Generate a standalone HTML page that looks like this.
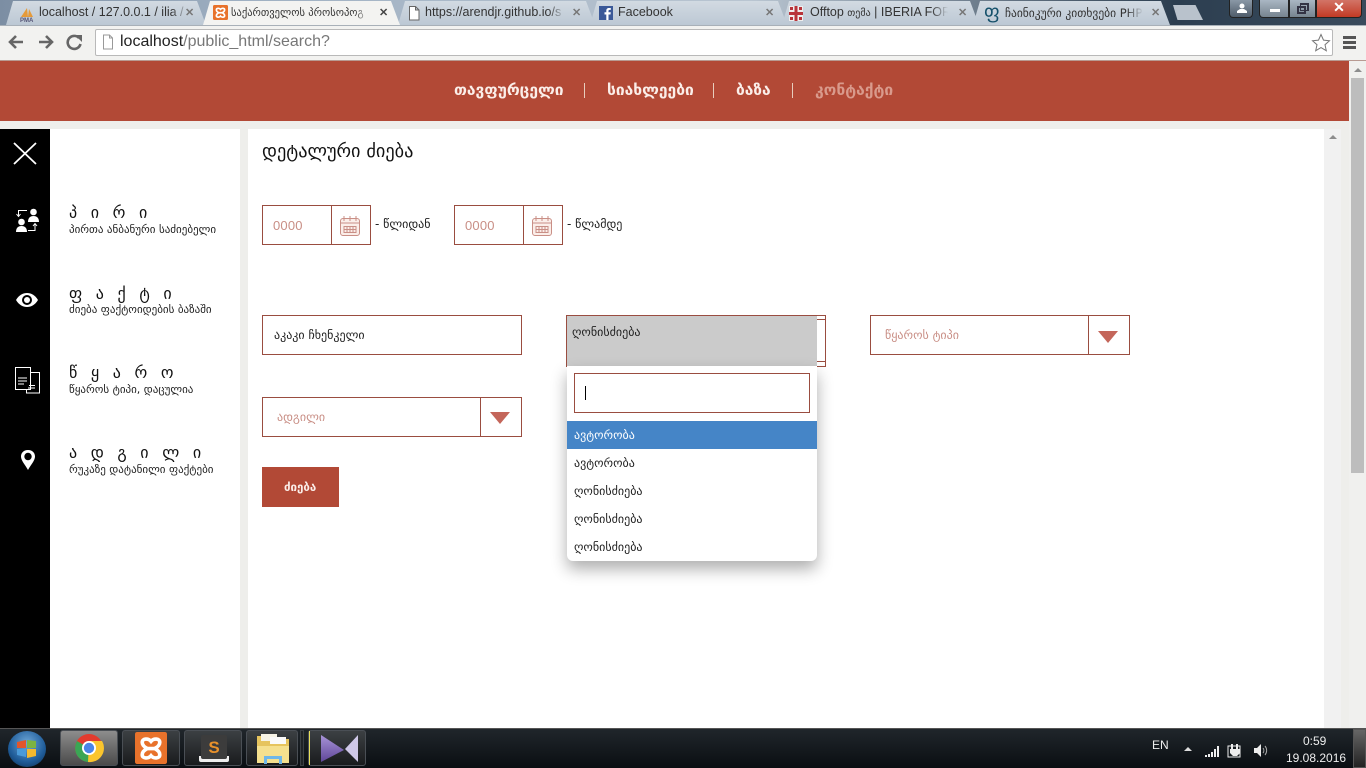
<!DOCTYPE html>
<html lang="ka"><head><meta charset="utf-8"><title>search</title>
<style>
*{box-sizing:border-box}
html,body{margin:0;padding:0;width:1366px;height:768px;overflow:hidden;background:#eeeeeb;font-family:"DejaVu Sans","Liberation Sans",sans-serif}
.a{position:absolute}
.t{position:absolute;white-space:nowrap}
.ls{font-family:"Liberation Sans",sans-serif}
.tab{position:absolute;top:1px;height:24px;background:linear-gradient(#d2dae2,#bcc8d4);clip-path:polygon(0 100%,7px 0,calc(100% - 9px) 0,100% 100%);font:12.5px "Liberation Sans",sans-serif;color:#333;overflow:hidden}
.tab.on{background:#f3f3f1}
.tab span{position:absolute;top:4px;white-space:nowrap}
.tab span.fd{-webkit-mask-image:linear-gradient(90deg,#000 88%,transparent);mask-image:linear-gradient(90deg,#000 88%,transparent)}
.tab b{position:absolute;top:5px;font:bold 11px "Liberation Sans",sans-serif;color:#777}
.bx{position:absolute;border:1px solid #9a4d40;background:#fff}
.tb{position:absolute;top:730px;width:58px;height:36px;border:1px solid #4a4f55;border-radius:3px;background:linear-gradient(#3c4043,#191b1d)}
.h{position:absolute;white-space:nowrap;left:69px;font-size:16px;letter-spacing:13.6px;color:#111}
.s{position:absolute;white-space:nowrap;left:69px;font-size:11px;color:#222}
.n{position:absolute;white-space:nowrap;top:81px;font-size:15.6px;font-weight:bold;color:#fbeee9}
.f{position:absolute;white-space:nowrap;font-size:12px;color:#222}
.ph{color:#c98f86}
</style></head>
<body>
<!-- window frame -->
<div class="a" style="left:0;top:0;width:1366px;height:25px;background:linear-gradient(90deg,#7c8ea3 0,#9fb0c2 18%,#b9c5d1 55%,#2c3e50 86%,#3a4b5c 100%)"></div>
<div class="tab" style="left:6px;width:200px"><svg class="a" style="left:13px;top:6px" width="18" height="16" viewBox="0 0 18 16"><path d="M2 10 8 1l1 9zM9 10l1-8 4 8z" fill="#e59a3a"/><text x="1" y="15" font-size="6" font-weight="bold" fill="#557" font-family="Liberation Sans">PMA</text></svg><span class="fd" style="left:33px;width:150px;overflow:hidden">localhost / 127.0.0.1 / ilia /</span><b style="left:179px">✕</b></div>
<div class="tab on" style="left:203px;width:197px;z-index:2"><svg class="a" style="left:10px;top:4px" width="15" height="15" viewBox="0 0 31 31"><rect width="31" height="31" rx="3" fill="#e8722b"/><path d="M15.500 9C13 6 7 6 7 10c0 3 3 5 5 6-2 1-5 3-5 6 0 4 6 4 8.500 1C18 26 24 26 24 22c0-3-3-5-5-6 2-1 5-3 5-6 0-4-6-4-8.500-1zM12 16h7" fill="none" stroke="#fff" stroke-width="3.500"/></svg><span class="fd" style="left:28px;font:10.500px 'DejaVu Sans',sans-serif;top:6px;width:140px;overflow:hidden">საქართველოს პროსოპოგ</span><b style="left:176px;color:#444">✕</b></div>
<div class="tab" style="left:398px;width:197px"><svg class="a" style="left:10px;top:5px" width="12" height="15" viewBox="0 0 12 15"><path d="M1.500.5h6l3.500 3.500v10h-9.500zM7.500.5V4H11" fill="#fff" stroke="#666"/></svg><span class="fd" style="left:27px;width:140px;overflow:hidden">https://arendjr.github.io/s</span><b style="left:174px">✕</b></div>
<div class="tab" style="left:590px;width:197px"><svg class="a" style="left:9px;top:5px" width="14" height="14" viewBox="0 0 14 14"><rect width="14" height="14" fill="#3b5998"/><path d="M9.500 14V8.500h2l.3-2.200H9.500V5c0-.7.3-1.100 1.100-1.100h1.200V2h-1.700C8.300 2 7.300 3 7.300 4.700v1.600H5.500v2.200h1.800V14z" fill="#fff"/></svg><span style="left:28px">Facebook</span><b style="left:175px">✕</b></div>
<div class="tab" style="left:782px;width:197px"><svg class="a" style="left:7px;top:5px" width="14" height="15" viewBox="0 0 14 15"><rect width="14" height="15" fill="#eee"/><path d="M5.500 0h3v15h-3zM0 6h14v3H0z" fill="#b8343a"/><path d="M1 1h3v3H1zM10 1h3v3h-3zM1 11h3v3H1zM10 11h3v3h-3z" fill="#b8343a"/></svg><span class="fd" style="left:28px;width:138px;overflow:hidden">Offtop <i style="font:normal 10px 'DejaVu Sans'">თემა</i> | IBERIA FORU</span><b style="left:176px">✕</b></div>
<div class="tab" style="left:973px;width:197px"><span style="left:11px;top:0;font:19px 'DejaVu Sans';color:#14506a">ფ</span><span class="fd" style="left:32px;top:5px;font:11.500px 'DejaVu Sans',sans-serif;width:138px;overflow:hidden">ჩაინიკური კითხვები PHP</span><b style="left:178px">✕</b></div>
<div class="a" style="left:1173px;top:5px;width:30px;height:15px;background:#b9c2cc;clip-path:polygon(0 0,75% 0,100% 100%,15% 100%)"></div>
<!-- window buttons -->
<div class="a" style="left:1229px;top:0;width:24px;height:18px;border:1px solid #222;border-top:0;border-radius:0 0 4px 4px;background:linear-gradient(#8a98a6,#4f5c6a)"><svg class="a" style="left:5px;top:3px" width="14" height="11" viewBox="0 0 14 11"><circle cx="7" cy="3" r="2.500" fill="#fff"/><path d="M2 10V8l3-2h4l3 2v2z" fill="#fff"/></svg></div>
<div class="a" style="left:1259px;top:0;width:30px;height:18px;border:1px solid #222;border-top:0;border-radius:0 0 0 4px;background:linear-gradient(#a9b6c3,#76848f)"><div class="a" style="left:10px;top:9px;width:10px;height:3px;background:#fff"></div></div>
<div class="a" style="left:1289px;top:0;width:27px;height:18px;border:1px solid #222;border-top:0;background:linear-gradient(#a9b6c3,#76848f)"><div class="a" style="left:7px;top:6px;width:9px;height:8px;border:2px solid #334"></div><div class="a" style="left:10px;top:3px;width:9px;height:8px;border:2px solid #334;border-left-width:1px;border-bottom-width:1px"></div></div>
<div class="a" style="left:1316px;top:0;width:46px;height:18px;border:1px solid #222;border-top:0;border-radius:0 0 4px 0;background:linear-gradient(#d27467,#c33a24);color:#fff;font:bold 14px/15px 'Liberation Sans';text-align:center">✕</div>
<!-- toolbar -->
<div class="a" style="left:0;top:25px;width:1366px;height:35px;background:#f2f2f0;border-top:1px solid #a8b0b8"></div>
<svg class="a" style="left:7px;top:33px" width="78" height="18" viewBox="0 0 78 18"><path d="M16 9H4M9 3 3 9l6 6" fill="none" stroke="#666" stroke-width="2.600"/><path d="M32 9h12M39 3l6 6-6 6" fill="none" stroke="#666" stroke-width="2.600"/><path d="M72 5a6.500 6.500 0 1 0 1.500 6" fill="none" stroke="#666" stroke-width="2.600"/><path d="M68 2h7v7z" fill="#666"/></svg>
<div class="a" style="left:95px;top:29px;width:1238px;height:27px;background:#fff;border:1px solid #b9b9b9;border-radius:2px"></div>
<svg class="a" style="left:102px;top:34px" width="12" height="16" viewBox="0 0 12 16"><path d="M1.500 1h6l3 3v11h-9zM7.500 1v3h3" fill="#fff" stroke="#999"/></svg>
<div class="t ls" style="left:120px;top:33px;font-size:16px;color:#222">localhost<span style="color:#777">/public_html/search?</span></div>
<svg class="a" style="left:1311px;top:33px" width="20" height="19" viewBox="0 0 20 19"><path d="m10 1.500 2.500 5.600 6 .6-4.500 4 1.300 6L10 14.600 4.700 17.700 6 11.700l-4.500-4 6-.6z" fill="#fff" stroke="#777"/></svg>
<div class="a" style="left:1343px;top:36px;width:13px;height:3px;background:#555"></div><div class="a" style="left:1343px;top:41px;width:13px;height:3px;background:#555"></div><div class="a" style="left:1343px;top:46px;width:13px;height:3px;background:#555"></div>
<!-- header -->
<div class="a" style="left:0;top:60px;width:1349px;height:61px;background:#b24936"></div>
<div class="a" style="left:0;top:60px;width:1366px;height:1px;background:#b89a92"></div>
<div class="n" style="left:454px">თავფურცელი</div>
<div class="a" style="left:584px;top:83px;width:1px;height:15px;background:#e8cdbd"></div>
<div class="n" style="left:607px">სიახლეები</div>
<div class="a" style="left:713px;top:83px;width:1px;height:15px;background:#e8cdbd"></div>
<div class="n" style="left:736px">ბაზა</div>
<div class="a" style="left:792px;top:83px;width:1px;height:15px;background:#e8cdbd"></div>
<div class="n" style="left:815px;color:#d99a8c">კონტაქტი</div>
<!-- outer scrollbar -->
<div class="a" style="left:1349px;top:61px;width:17px;height:667px;background:#f0f0ee"></div>
<div class="a" style="left:1351px;top:78px;width:13px;height:395px;background:#bdbdbd"></div>
<div class="a" style="left:1354px;top:68px;border:4px solid transparent;border-top:0;border-bottom:4px solid #8d8d8d"></div>
<!-- black sidebar -->
<div class="a" style="left:0;top:129px;width:50px;height:599px;background:#000"></div>
<div class="a" style="left:50px;top:129px;width:190px;height:599px;background:#fff"></div>
<div class="a" style="left:248px;top:129px;width:1076px;height:599px;background:#fff"></div>
<div class="a" style="left:1324px;top:129px;width:17px;height:599px;background:#f1f1f1"></div>
<div class="a" style="left:1329px;top:135px;border:4px solid transparent;border-top:0;border-bottom:4px solid #8d8d8d"></div>
<svg class="a" style="left:0;top:129px" width="50" height="360" viewBox="0 0 50 360">
<path d="M14 14 36 35M36 14 14 35" stroke="#fff" stroke-width="1.800" fill="none"/>
<g fill="#fff"><circle cx="33.500" cy="83" r="3.300"/><path d="M28 93c0-4 2-6 5.500-6s5.500 2 5.500 6z"/><circle cx="21.500" cy="93" r="3.300"/><path d="M16 103c0-4 2-6 5.500-6s5.500 2 5.500 6z"/></g>
<path d="M27 81.500h-8.500v5M16.500 85l2 2.500 2-2.500M28 101.500h7v-6M33 97l2-2.500 2 2.500" stroke="#fff" fill="none"/>
<path d="M16 171c3-5 7-7 11-7s8 2 11 7c-3 5-7 7-11 7s-8-2-11-7z" fill="#fff"/><circle cx="27" cy="171" r="5" fill="#000"/><circle cx="27" cy="171" r="3" fill="#fff"/>
<path d="M15.500 238.500h15v22h-15z" fill="none" stroke="#fff"/><path d="M18 249h9M18 252h9M18 255h6M31 243.500h8.500v20.500h-13v-3" stroke="#fff" fill="none"/><path d="M29 256.500h6M28 259h7" stroke="#fff"/>
<path d="M28 321c-4.500 0-7 3-7 6.500 0 4 4 8 7 13.500 3-5.500 7-9.500 7-13.500 0-3.500-2.500-6.500-7-6.500z" fill="#fff"/><circle cx="28" cy="327.500" r="3.700" fill="#000"/>
</svg>
<!-- sidebar text -->
<div class="h" style="top:203px">პირი</div>
<div class="s" style="top:223px">პირთა ანბანური საძიებელი</div>
<div class="h" style="top:284px">ფაქტი</div>
<div class="s" style="top:303px">ძიება ფაქტოიდების ბაზაში</div>
<div class="h" style="top:363px">წყარო</div>
<div class="s" style="top:383px">წყაროს ტიპი, დაცულია</div>
<div class="h" style="top:443px">ადგილი</div>
<div class="s" style="top:463px">რუკაზე დატანილი ფაქტები</div>
<!-- main -->
<div class="t" style="left:262px;top:141px;font-size:18.300px;color:#111">დეტალური ძიება</div>
<div class="bx" style="left:262px;top:205px;width:109px;height:40px"></div>
<div class="a" style="left:331px;top:205px;width:1px;height:40px;background:#9a4d40"></div>
<div class="t ls ph" style="left:273px;top:218px;font-size:13px;letter-spacing:.2px">0000</div>
<svg class="a" style="left:340px;top:215px" width="20" height="21" viewBox="0 0 20 21"><rect x=".5" y="3.500" width="19" height="17" rx="2.500" fill="#fbeee9" stroke="#c98f86"/><path d="M.5 8h19M4 1v5M10 1v5M16 1v5M4 11.500h12v6H4zM4 14.500h12M7 11.500v6M10 11.500v6M13 11.500v6" stroke="#c98f86" fill="none"/></svg>
<div class="f" style="left:375px;top:217px">- წლიდან</div>
<div class="bx" style="left:454px;top:205px;width:109px;height:40px"></div>
<div class="a" style="left:523px;top:205px;width:1px;height:40px;background:#9a4d40"></div>
<div class="t ls ph" style="left:465px;top:218px;font-size:13px;letter-spacing:.2px">0000</div>
<svg class="a" style="left:532px;top:215px" width="20" height="21" viewBox="0 0 20 21"><rect x=".5" y="3.500" width="19" height="17" rx="2.500" fill="#fbeee9" stroke="#c98f86"/><path d="M.5 8h19M4 1v5M10 1v5M16 1v5M4 11.500h12v6H4zM4 14.500h12M7 11.500v6M10 11.500v6M13 11.500v6" stroke="#c98f86" fill="none"/></svg>
<div class="f" style="left:567px;top:217px">- წლამდე</div>
<div class="bx" style="left:262px;top:315px;width:260px;height:40px"></div>
<div class="f" style="left:274px;top:328px">აკაკი ჩხენკელი</div>
<div class="bx" style="left:566px;top:315px;width:260px;height:52px"></div>
<div class="a" style="left:567px;top:316px;width:250px;height:50px;background:#cbcbcb"></div>
<div class="a" style="left:817px;top:319px;width:9px;height:1px;background:#9a4d40"></div>
<div class="a" style="left:817px;top:361px;width:9px;height:1px;background:#9a4d40"></div>
<div class="f" style="left:572px;top:325px">ღონისძიება</div>
<div class="bx" style="left:870px;top:315px;width:260px;height:40px"></div>
<div class="a" style="left:1088px;top:315px;width:1px;height:40px;background:#9a4d40"></div>
<div class="f ph" style="left:885px;top:328px">წყაროს ტიპი</div>
<div class="a" style="left:1098px;top:331px;border:10.500px solid transparent;border-bottom:0;border-top:12px solid #c4665a"></div>
<div class="bx" style="left:262px;top:397px;width:260px;height:40px"></div>
<div class="a" style="left:480px;top:397px;width:1px;height:40px;background:#9a4d40"></div>
<div class="f ph" style="left:277px;top:410px">ადგილი</div>
<div class="a" style="left:490px;top:412px;border:10.500px solid transparent;border-bottom:0;border-top:12px solid #c4665a"></div>
<div class="a" style="left:262px;top:467px;width:77px;height:40px;background:#b24936"></div>
<div class="t" style="left:284px;top:480px;font-size:11.500px;font-weight:bold;color:#fbeee9">ძიება</div>
<!-- dropdown -->
<div class="a" style="left:567px;top:366px;width:250px;height:195px;background:#fff;border-radius:0 0 6px 6px;box-shadow:0 8px 16px rgba(0,0,0,.32)"></div>
<div class="bx" style="left:574px;top:373px;width:236px;height:40px"></div>
<div class="a" style="left:585px;top:386px;width:1px;height:14px;background:#000"></div>
<div class="a" style="left:567px;top:421px;width:250px;height:28px;background:#4585c7"></div>
<div class="f" style="left:574px;top:428px;color:#fff">ავტორობა</div>
<div class="f" style="left:574px;top:456px">ავტორობა</div>
<div class="f" style="left:574px;top:484px">ღონისძიება</div>
<div class="f" style="left:574px;top:512px">ღონისძიება</div>
<div class="f" style="left:574px;top:540px">ღონისძიება</div>
<!-- taskbar -->
<div class="a" style="left:0;top:728px;width:1366px;height:40px;background:linear-gradient(#20262b,#0a0e12);border-top:1px solid #555"></div>
<div class="a" style="left:8px;top:731px;width:38px;height:36px;border-radius:50%;background:radial-gradient(circle at 50% 35%,#6fa8d8,#1f5c99 60%,#0c2a4a)"></div>
<svg class="a" style="left:16px;top:739px" width="22" height="20" viewBox="0 0 22 20"><path d="M1 3l9-2v8H1z" fill="#e2562b"/><path d="M11 1l9 1v7h-9z" fill="#7cb342"/><path d="M1 10h9v8l-9-2z" fill="#4a9ad9"/><path d="M11 10h9v7l-9 2z" fill="#f5b92e"/></svg>
<div class="tb" style="left:60px;background:linear-gradient(#8d8d8d,#4a4a4a)"><svg class="a" style="left:13px;top:2px" width="30" height="30" viewBox="0 0 30 30"><circle cx="15" cy="15" r="14" fill="#e33b2e"/><path d="M15 15 27 22A14 14 0 0 1 11 28.500z" fill="#3aa655"/><path d="M15 15 11 28.500A14 14 0 0 1 3 8z" fill="#3aa655"/><path d="M15 8h13A14 14 0 0 1 14 29z" fill="#fbc52d"/><circle cx="15" cy="15" r="7" fill="#fff"/><circle cx="15" cy="15" r="5.200" fill="#4a85e8"/></svg></div>
<div class="tb" style="left:122px"><svg class="a" style="left:12px;top:1px" width="32" height="32" viewBox="0 0 31 31"><rect width="31" height="31" rx="2" fill="#e8722b"/><path d="M15.500 9C13 6 7 6 7 10c0 3 3 5 5 6-2 1-5 3-5 6 0 4 6 4 8.500 1C18 26 24 26 24 22c0-3-3-5-5-6 2-1 5-3 5-6 0-4-6-4-8.500-1zM12 16h7" fill="none" stroke="#fff" stroke-width="3.500"/></svg></div>
<div class="tb" style="left:184px"><svg class="a" style="left:13px;top:1px" width="32" height="32" viewBox="0 0 32 32"><path d="M1 24h30v4a2 2 0 0 1-2 2H3a2 2 0 0 1-2-2z" fill="#eee"/><rect x="3" y="3" width="26" height="24" rx="2" fill="#3c3c3c"/><text x="16" y="21" text-anchor="middle" font-size="17" font-weight="bold" fill="#e8912b" font-family="Liberation Sans">S</text></svg></div>
<div class="tb" style="left:246px;width:52px"><svg class="a" style="left:8px;top:1px" width="36" height="33" viewBox="0 0 36 33"><path d="M2 4h14l3 3h15v24H2z" fill="#e6c45e"/><rect x="6" y="2" width="16" height="7" fill="#f6f3e6"/><rect x="15" y="5" width="16" height="7" fill="#fafafa"/><path d="M2 14h32v17H2z" fill="#f5e08e"/><path d="M9 32V24h18v8h-3v-5H12v5z" fill="#6fb7e8"/></svg></div>
<div class="a" style="left:300px;top:730px;width:4px;height:36px;border:1px solid #3a3f44;background:#1f2326"></div>
<div class="tb" style="left:308px"><div class="a" style="left:0;top:0;width:1px;height:34px;background:#e8e05a"></div><svg class="a" style="left:12px;top:4px" width="37" height="27" viewBox="0 0 37 27"><defs><linearGradient id="g" x1="0" y1="0" x2="0" y2="1"><stop offset="0" stop-color="#a894d8"/><stop offset="1" stop-color="#5f4698"/></linearGradient></defs><path d="M0 0 23 15 0 27z" fill="url(#g)"/><path d="M37 0 24 14l13 13z" fill="#cfc8e8"/></svg></div>
<div class="t ls" style="left:1152px;top:738px;font-size:12px;color:#eee">EN</div>
<div class="a" style="left:1184px;top:747px;border:4px solid transparent;border-top:0;border-bottom:4px solid #ddd"></div>
<svg class="a" style="left:1204px;top:743px" width="66" height="15" viewBox="0 0 66 15"><path d="M1 12h2v2H1zM4 11h2v3H4zM7 9h2v5H7zM10 6h2v8h-2zM13 3h2v11h-2z" fill="#eee"/><path d="M24 3h12v11H24z" fill="none" stroke="#eee"/><path d="M27 1h2v5h-2zM32 1h2v5h-2zM26 6h10v4l-3 3h-4l-3-3z" fill="#eee"/><path d="M50 5h3l4-4v13l-4-4h-3z" fill="#eee"/><path d="M59 5a4 4 0 0 1 0 5M61 3a7 7 0 0 1 0 9" stroke="#aaa" fill="none"/></svg>
<div class="t ls" style="left:1303px;top:734px;font-size:12px;color:#eee">0:59</div>
<div class="t ls" style="left:1286px;top:751px;font-size:12px;color:#eee">19.08.2016</div>
<div class="a" style="left:1353px;top:729px;width:13px;height:39px;border:1px solid #555;background:linear-gradient(#666,#222)"></div>
</body></html>
